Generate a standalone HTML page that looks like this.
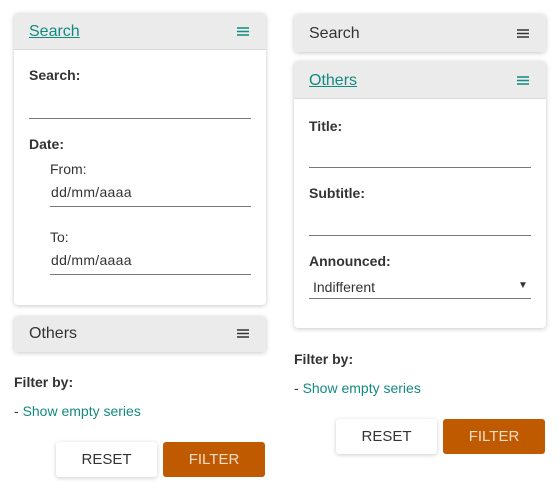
<!DOCTYPE html>
<html><head><meta charset="utf-8"><style>
*{margin:0;padding:0;box-sizing:border-box}
body{width:560px;height:503px;background:#fff;font-family:"Liberation Sans",sans-serif;color:#333;position:relative;overflow:hidden}
.a{position:absolute;white-space:nowrap}
.card{position:absolute;background:#fff;border-radius:4px;box-shadow:0 1px 5px rgba(0,0,0,.22);overflow:hidden}
.hd{position:absolute;left:0;right:0;top:0;background:#ebebeb;}
.hd.open{border-bottom:1px solid #d8d8d8}
.ht{position:absolute;left:15px;font-size:16px;line-height:20px}
.ht.u{color:#138a80;text-decoration:underline}
.hb{position:absolute;right:17px;width:12px;height:9px}
.lb{position:absolute;font-weight:bold;font-size:14px;line-height:16px;color:#333}
.tx{position:absolute;font-size:14px;line-height:16px;color:#333}
.ln{position:absolute;height:1px;background:#777}
.lnk{font-size:14px;color:#138a80}
.btn{position:absolute;height:35px;border-radius:3px;font-size:15px;line-height:35px;text-align:center}
.rs{background:#fff;box-shadow:0 1px 4px rgba(0,0,0,.2);color:#333}
.fl{background:#c05a00;color:#f3dcc8}
</style></head><body>

<div class="card" style="left:14px;top:13px;width:252px;height:292px">
  <div class="hd open" style="height:37px"><span class="ht u" style="top:9px">Search</span><svg class="hb" style="top:14px" viewBox="0 0 12 9"><path d="M0 1h12M0 4.5h12M0 8h12" stroke="#138a80" stroke-width="1.5"/></svg></div>
  <div class="lb" style="left:15px;top:54px">Search:</div>
  <div class="ln" style="left:15px;top:105px;width:222px"></div>
  <div class="lb" style="left:15px;top:123px">Date:</div>
  <div class="tx" style="left:36px;top:148px">From:</div>
  <div class="tx" style="left:37px;top:171px;letter-spacing:.3px">dd/mm/aaaa</div>
  <div class="ln" style="left:36px;top:193px;width:201px"></div>
  <div class="tx" style="left:36px;top:216px">To:</div>
  <div class="tx" style="left:37px;top:239px;letter-spacing:.3px">dd/mm/aaaa</div>
  <div class="ln" style="left:36px;top:261px;width:201px"></div>
</div>

<div class="card" style="left:14px;top:316px;width:252px;height:36px">
  <div class="hd" style="height:36px"><span class="ht" style="top:8px">Others</span><svg class="hb" style="top:13px" viewBox="0 0 12 9"><path d="M0 1h12M0 4.5h12M0 8h12" stroke="#333" stroke-width="1.5"/></svg></div>
</div>

<div class="lb" style="left:14px;top:374px">Filter by:</div>
<div class="a" style="left:14px;top:403px;font-size:14px">- <span class="lnk">Show empty series</span></div>
<div class="btn rs" style="left:56px;top:442px;width:101px">RESET</div>
<div class="btn fl" style="left:163px;top:442px;width:102px">FILTER</div>

<div class="card" style="left:294px;top:14px;width:252px;height:38px">
  <div class="hd" style="height:38px"><span class="ht" style="top:10px">Search</span><svg class="hb" style="top:15px" viewBox="0 0 12 9"><path d="M0 1h12M0 4.5h12M0 8h12" stroke="#333" stroke-width="1.5"/></svg></div>
</div>

<div class="card" style="left:294px;top:61px;width:252px;height:267px">
  <div class="hd open" style="height:38px"><span class="ht u" style="top:10px">Others</span><svg class="hb" style="top:15px" viewBox="0 0 12 9"><path d="M0 1h12M0 4.5h12M0 8h12" stroke="#138a80" stroke-width="1.5"/></svg></div>
  <div class="lb" style="left:15px;top:57px">Title:</div>
  <div class="ln" style="left:15px;top:106px;width:222px"></div>
  <div class="lb" style="left:15px;top:124px">Subtitle:</div>
  <div class="ln" style="left:15px;top:174px;width:222px"></div>
  <div class="lb" style="left:15px;top:192px">Announced:</div>
  <div class="tx" style="left:19px;top:218px">Indifferent</div>
  <div class="a" style="left:224px;top:219px;font-size:10px;color:#333">▼</div>
  <div class="ln" style="left:15px;top:237px;width:222px"></div>
</div>

<div class="lb" style="left:294px;top:351px">Filter by:</div>
<div class="a" style="left:294px;top:380px;font-size:14px">- <span class="lnk">Show empty series</span></div>
<div class="btn rs" style="left:336px;top:419px;width:101px">RESET</div>
<div class="btn fl" style="left:443px;top:419px;width:102px">FILTER</div>

</body></html>
